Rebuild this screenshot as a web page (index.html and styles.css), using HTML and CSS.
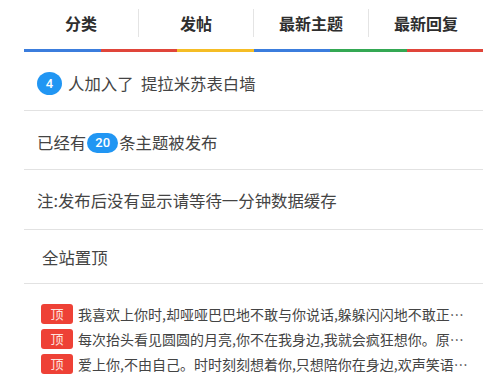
FILE: index.html
```html
<!DOCTYPE html>
<html lang="zh-CN">
<head>
<meta charset="utf-8">
<link rel="stylesheet" href="styles.css">
</head>
<body>
<div class="page">
  <nav class="tabs">
    <div class="tab">分类</div>
    <div class="tab">发帖</div>
    <div class="tab">最新主题</div>
    <div class="tab">最新回复</div>
  </nav>
  <div class="colorbar">
    <span class="c-blue"></span><span class="c-red"></span><span class="c-yellow"></span><span class="c-blue"></span><span class="c-green"></span><span class="c-red"></span>
  </div>
  <div class="row row1"><span class="badge round">4</span>人加入了&nbsp;&nbsp;提拉米苏表白墙</div>
  <div class="row row2">已经有<span class="badge pill">20</span>条主题被发布</div>
  <div class="row row3">注:发布后没有显示请等待一分钟数据缓存</div>
  <div class="row row4">全站置顶</div>
  <ul class="list">
    <li><span class="top">顶</span><span class="txt">我喜欢上你时,却哑哑巴巴地不敢与你说话,躲躲闪闪地不敢正视你的眼睛</span></li>
    <li><span class="top">顶</span><span class="txt">每次抬头看见圆圆的月亮,你不在我身边,我就会疯狂想你。原来我这么爱你</span></li>
    <li><span class="top">顶</span><span class="txt">爱上你,不由自己。时时刻刻想着你,只想陪你在身边,欢声笑语,直到永远</span></li>
  </ul>
</div>
</body>
</html>
```

FILE: styles.css
```css
html, body {
  margin: 0;
  padding: 0;
  background: #fff;
}
body {
  font-family: "Noto Sans CJK SC", "Noto Sans", sans-serif;
  color: #333;
}
.page {
  width: 459px;
  margin-left: 24px;
}
.tabs {
  display: flex;
  height: 49px;
  align-items: center;
}
.tab {
  flex: 1;
  text-align: center;
  font-size: 16px;
  font-weight: bold;
  color: #2e2e2e;
  line-height: 28px;
  border-left: 1px solid #e4e4e4;
  margin-top: -4px;
}
.tab:first-child {
  border-left: none;
}
.colorbar {
  display: flex;
  height: 3px;
}
.colorbar span {
  flex: 1;
}
.c-blue { background: #3b7ddd; }
.c-red { background: #e0453a; }
.c-yellow { background: #f5bd25; }
.c-green { background: #34a853; }
.row {
  display: flex;
  align-items: center;
  padding-left: 13px;
  font-size: 16.4px;
  color: #444;
  border-bottom: 1px solid #e2e2e2;
  box-sizing: border-box;
}
.row1 { height: 59px; padding-top: 4px; }
.row2 { height: 59px; padding-top: 3px; }
.row3 { height: 60px; }
.row4 { height: 54px; padding-left: 18px; }
.badge {
  display: inline-flex;
  align-items: center;
  justify-content: center;
  background: #2196f3;
  color: #fff;
  font-family: "Roboto", "Noto Sans", sans-serif;
  font-size: 13px;
  font-weight: 500;
}
.round {
  width: 25px;
  height: 23px;
  border-radius: 50%;
  margin-right: 6px;
}
.pill {
  width: 31px;
  height: 20px;
  border-radius: 10px;
  margin: 2px 1px 0 1px;
}
.list {
  list-style: none;
  margin: 0;
  padding: 17px 0 0 17px;
}
.list li {
  display: flex;
  align-items: center;
  height: 25px;
  font-size: 14px;
  color: #444;
}
.top {
  flex: none;
  width: 32px;
  height: 20px;
  border-radius: 3px;
  background: #ee4136;
  color: #fde3df;
  font-size: 13px;
  display: flex;
  align-items: center;
  justify-content: center;
  margin-right: 5px;
}
.txt {
  width: 391px;
  white-space: nowrap;
  overflow: hidden;
  text-overflow: ellipsis;
}
```
